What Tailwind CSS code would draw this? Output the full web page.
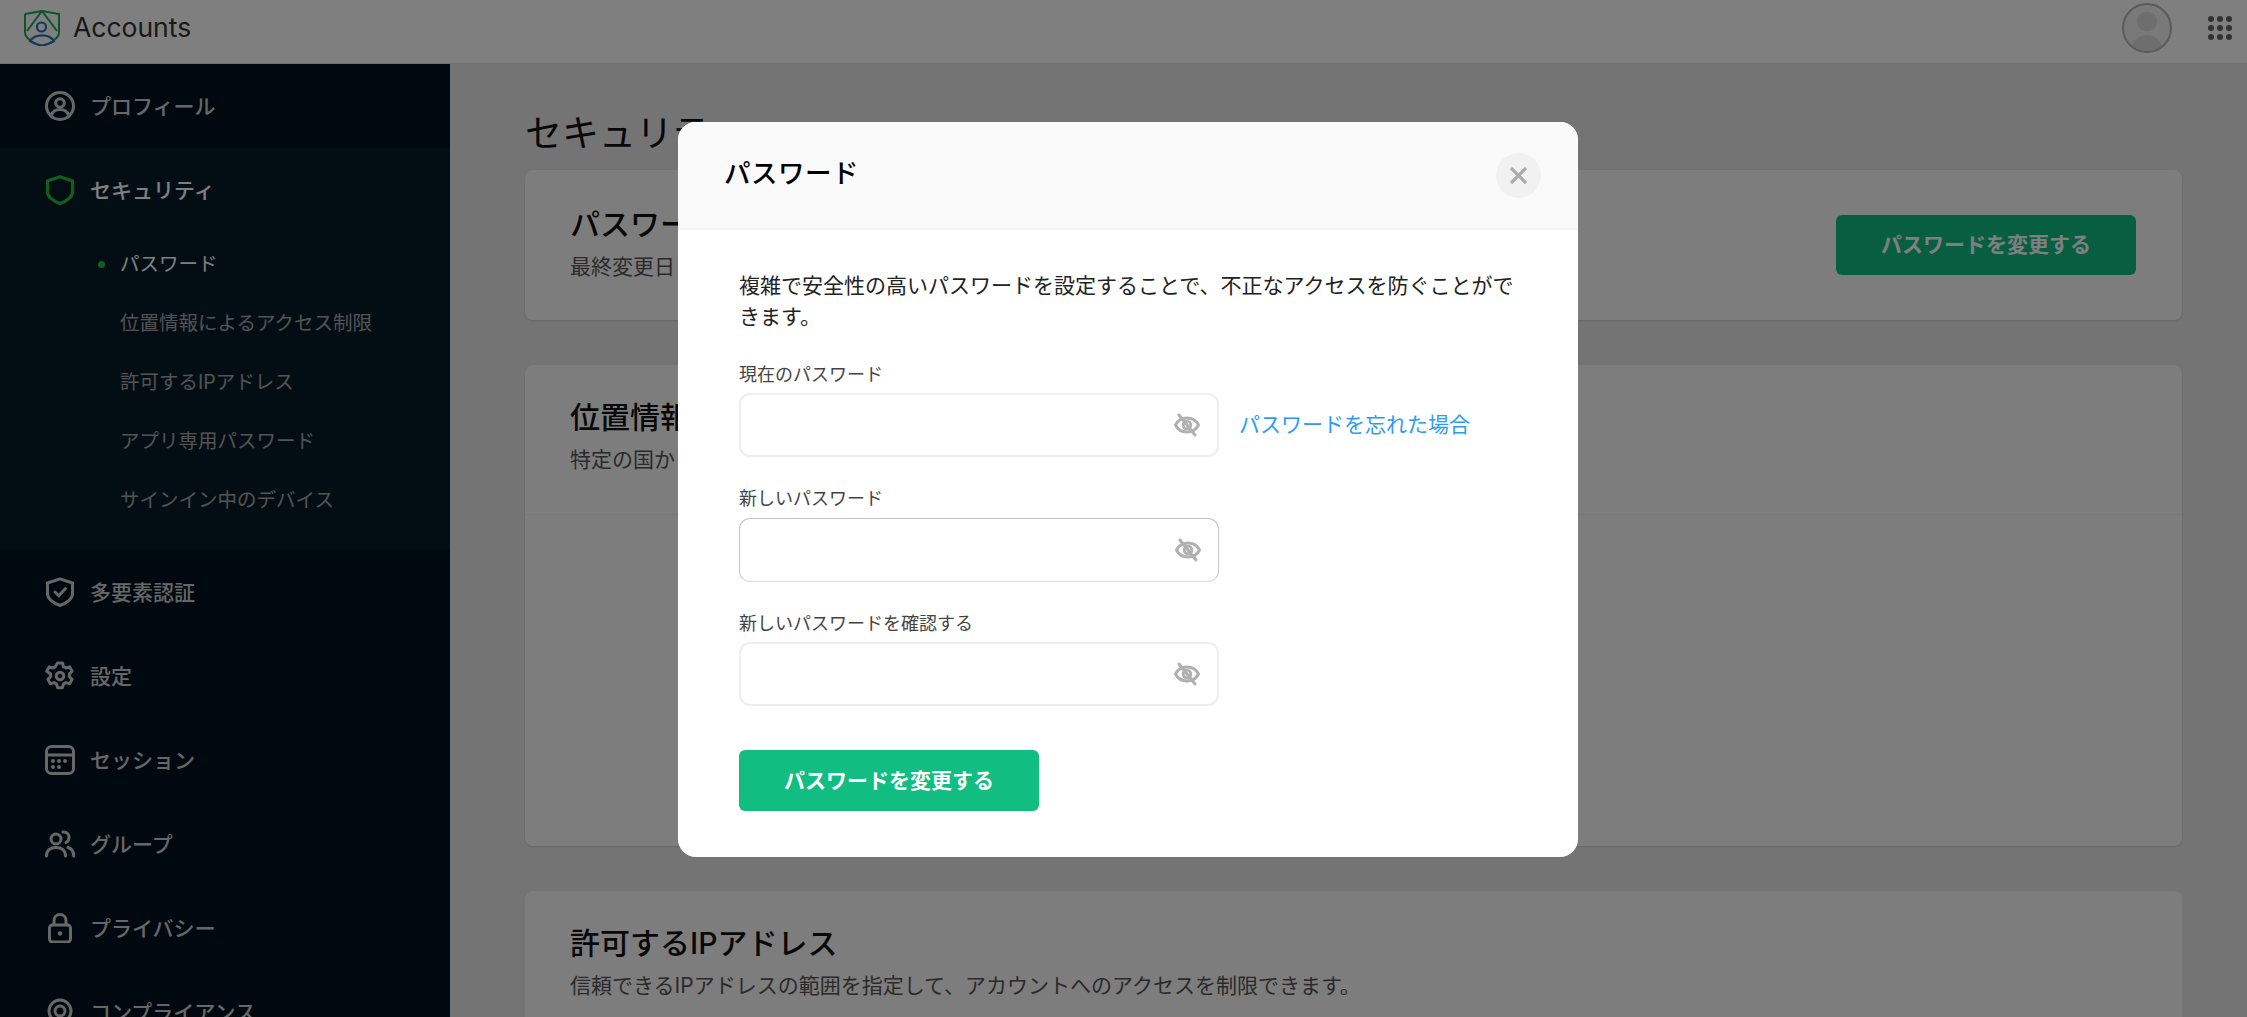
<!DOCTYPE html>
<html lang="ja">
<head>
  <meta charset="UTF-8">
  <title>Accounts - セキュリティ</title>
  <meta name="viewport" content="width=device-width, initial-scale=1.0">
  <script src="https://cdn.jsdelivr.net/npm/@tailwindcss/browser@4"></script>
</head>
<body class="h-[1017px] overflow-hidden bg-[#e8e9eb] text-[#111] font-['Inter','Noto_Sans_CJK_JP',sans-serif]">

  <!-- Top bar -->
  <header class="h-16 flex items-center justify-between bg-white border-b border-[#e2e2e2] pl-6 pr-[15px] pb-2">
    <div class="flex items-center gap-[13px]">
      <svg class="w-9 h-9" viewBox="0 0 36 36" fill="none" stroke-width="2">
        <path d="M1 4 L18 1 L35 4 V22 C35 25 33 28 30 30 M1 4 V22 C1 25 3 28 6 30" stroke="#1da65c"/>
        <path d="M3 21 L18 1 L33 21" stroke="#1da65c"/>
        <circle cx="17.500" cy="17" r="4.500" stroke="#2c6fb8" stroke-width="2.200"/>
        <path d="M6 31 C11 23.500 25 23.500 30 31 C26 33.500 22 35 18 35.500 C14 35 10 33.500 6 31 Z" stroke="#2c6fb8" stroke-width="2.200"/>
      </svg>
      <span class="text-[26.500px] leading-none text-[#333] font-['Inter',sans-serif]">Accounts</span>
    </div>
    <div class="flex items-center gap-[36px]">
      <div class="relative w-[50px] h-[50px] rounded-full border-2 border-[#b5b5b5] bg-[#f2f2f2] overflow-hidden">
        <div class="absolute left-[13px] top-[7px] w-5 h-[19px] rounded-[9px] bg-[#dcdcdc]"></div>
        <div class="absolute left-[7px] top-[30px] w-8 h-6 rounded-t-full bg-[#dcdcdc]"></div>
      </div>
      <div class="grid grid-cols-3 gap-[3px]">
        <span class="w-1.5 h-1.5 rounded-full bg-[#666]"></span>
        <span class="w-1.5 h-1.5 rounded-full bg-[#666]"></span>
        <span class="w-1.5 h-1.5 rounded-full bg-[#666]"></span>
        <span class="w-1.5 h-1.5 rounded-full bg-[#666]"></span>
        <span class="w-1.5 h-1.5 rounded-full bg-[#666]"></span>
        <span class="w-1.5 h-1.5 rounded-full bg-[#666]"></span>
        <span class="w-1.5 h-1.5 rounded-full bg-[#666]"></span>
        <span class="w-1.5 h-1.5 rounded-full bg-[#666]"></span>
        <span class="w-1.5 h-1.5 rounded-full bg-[#666]"></span>
      </div>
    </div>
  </header>

  <div class="flex h-[953px] overflow-hidden">
    <!-- Sidebar -->
    <aside class="w-[450px] shrink-0 bg-[#00121e] text-[#cfcfcf] text-[21px] font-medium leading-none overflow-hidden">
      <a class="h-[84px] flex items-center gap-[15px] pl-[45px]">
        <svg class="w-[30px] h-[30px]" viewBox="0 0 30 30" fill="none" stroke="currentColor" stroke-width="3">
          <circle cx="15" cy="15" r="13.500"/><circle cx="15" cy="12" r="4.300"/>
          <path d="M6.500 24 C8 19.500 11 18.500 15 18.500 C19 18.500 22 19.500 23.500 24"/>
        </svg>
        <span>プロフィール</span>
      </a>

      <div class="h-[402px] bg-[#061d29]">
        <a class="h-[84px] flex items-center gap-[15px] pl-[45px] text-white">
          <svg class="w-[30px] h-[30px]" viewBox="0 0 30 30" fill="none" stroke="#20c03a" stroke-width="3.200">
            <path d="M15 1.800 L27.500 6 V17 C27.500 22 21 26.500 15 28.500 C9 26.500 2.500 22 2.500 17 V6 Z" stroke-linejoin="round"/>
          </svg>
          <span>セキュリティ</span>
        </a>
        <ul class="text-[19.500px] font-normal text-[#a6a6a6] pt-[3px]">
          <li class="h-[59px] flex items-center pl-[98px] text-white">
            <span class="w-[7px] h-[7px] rounded-full bg-[#20c03a] mr-[15px]"></span>パスワード
          </li>
          <li class="h-[59px] flex items-center pl-[120px]">位置情報によるアクセス制限</li>
          <li class="h-[59px] flex items-center pl-[120px]">許可するIPアドレス</li>
          <li class="h-[59px] flex items-center pl-[120px]">アプリ専用パスワード</li>
          <li class="h-[59px] flex items-center pl-[120px]">サインイン中のデバイス</li>
        </ul>
      </div>

      <a class="h-[84px] flex items-center gap-[15px] pl-[45px]">
        <svg class="w-[30px] h-[30px]" viewBox="0 0 30 30" fill="none" stroke="currentColor" stroke-width="3" stroke-linejoin="round" stroke-linecap="round">
          <path d="M15 1.800 L27.500 6 V17 C27.500 22 21 26.500 15 28.500 C9 26.500 2.500 22 2.500 17 V6 Z"/>
          <path d="M10 15 L13.800 18.800 L20.500 11.500"/>
        </svg>
        <span>多要素認証</span>
      </a>
      <a class="h-[84px] flex items-center gap-[15px] pl-[45px]">
        <svg class="w-[30px] h-[30px]" viewBox="0 0 24 24" fill="none" stroke="currentColor" stroke-width="2.400" stroke-linejoin="round">
          <path d="M10 1.500 h4 l.7 3 2 1.100 3-.9 2 3.500-2.200 2.100 v2.300 l2.200 2.100-2 3.500-3-.9-2 1.100-.7 3 h-4 l-.7-3-2-1.100-3 .9-2-3.500 2.200-2.100 v-2.300 L1.300 8.200 l2-3.500 3 .9 2-1.100 Z"/>
          <circle cx="12" cy="12" r="3"/>
        </svg>
        <span>設定</span>
      </a>
      <a class="h-[84px] flex items-center gap-[15px] pl-[45px]">
        <svg class="w-[30px] h-[30px]" viewBox="0 0 30 30" fill="none" stroke="currentColor" stroke-width="3">
          <rect x="1.500" y="1.500" width="27" height="27" rx="5"/>
          <path d="M1.500 10 H28.500"/>
          <g fill="currentColor" stroke="none">
            <circle cx="8" cy="16" r="2"/><circle cx="14" cy="16" r="2"/><circle cx="20" cy="16" r="2"/>
            <circle cx="8" cy="22" r="2"/><circle cx="14" cy="22" r="2"/>
          </g>
        </svg>
        <span>セッション</span>
      </a>
      <a class="h-[84px] flex items-center gap-[15px] pl-[45px]">
        <svg class="w-[30px] h-[30px]" viewBox="0 0 30 30" fill="none" stroke="currentColor" stroke-width="3" stroke-linecap="round">
          <circle cx="11" cy="10" r="5"/>
          <path d="M1.500 27 C1.500 21 6 18.500 11 18.500 C16 18.500 20.500 21 20.500 27"/>
          <path d="M18 3 C21.500 2.500 24 5 24 8.500 C24 11 22.800 12.500 21 13.500"/>
          <path d="M23 18.500 C26.500 19.500 28.700 22.500 28.700 27"/>
        </svg>
        <span>グループ</span>
      </a>
      <a class="h-[84px] flex items-center gap-[15px] pl-[45px]">
        <svg class="w-[30px] h-[30px]" viewBox="0 0 30 30" fill="none" stroke="currentColor" stroke-width="3">
          <rect x="4.500" y="12" width="21" height="17" rx="3"/>
          <path d="M9 12 V8 C9 4 11.500 1.500 15 1.500 C18.500 1.500 21 4 21 8 V12"/>
          <circle cx="15" cy="20.500" r="2.200" fill="currentColor" stroke="none"/>
        </svg>
        <span>プライバシー</span>
      </a>
      <a class="h-[84px] flex items-center gap-[15px] pl-[45px]">
        <svg class="w-[30px] h-[30px]" viewBox="0 0 30 30" fill="none" stroke="currentColor" stroke-width="3">
          <circle cx="15" cy="14" r="11"/><circle cx="15" cy="14" r="5"/>
        </svg>
        <span>コンプライアンス</span>
      </a>
    </aside>

    <!-- Main content behind the modal -->
    <main class="flex-1 pl-[75px] pr-[65px] pt-[46px]">
      <h1 class="text-[37px] leading-[48px] h-[60px] font-normal">セキュリティ</h1>
      <section class="h-[150px] bg-[#fbfbfb] rounded-lg shadow-sm pl-[45px] pr-[46px] flex items-center justify-between">
        <div class="pb-[6px]">
          <h2 class="text-[30px] leading-[44px] mb-[6px] font-medium">パスワード</h2>
          <p class="text-[21px] leading-[30px] text-[#555]">最終変更日：2024年1月15日</p>
        </div>
        <button class="w-[300px] h-[60px] rounded-md bg-[#11bd81] text-white text-[21px] font-bold">パスワードを変更する</button>
      </section>
      <section class="h-[481px] mt-[45px] bg-[#fbfbfb] rounded-lg shadow-sm">
        <div class="h-[150px] pl-[45px] pr-[46px] pt-[30px] border-b border-[#f0f0f0]">
          <h2 class="text-[30px] leading-[44px] mb-[6px] font-medium">位置情報によるアクセス制限</h2>
          <p class="text-[21px] leading-[30px] text-[#555]">特定の国からのアクセスを制限できます。</p>
        </div>
      </section>
      <section class="h-[200px] mt-[45px] bg-[#fbfbfb] rounded-lg pl-[45px] pr-[46px] pt-[30px]">
        <h2 class="text-[30px] leading-[44px] mb-[6px] font-medium">許可するIPアドレス</h2>
        <p class="text-[21px] leading-[30px] text-[#555]">信頼できるIPアドレスの範囲を指定して、アカウントへのアクセスを制限できます。</p>
      </section>
    </main>
  </div>

  <!-- Password modal -->
  <div class="fixed inset-0 bg-black/50">
    <div class="absolute left-[678px] top-[122px] w-[900px] h-[735px] bg-white rounded-[18px] overflow-hidden">
      <div class="h-[108px] bg-[#fafafa] border-b-2 border-[#f5f5f5] flex items-center justify-between pl-[46px] pr-[37px]">
        <h2 class="text-[26.500px] font-medium tracking-[0.5px] text-black -mt-[3px]">パスワード</h2>
        <button class="w-[45px] h-[45px] rounded-full bg-[#f1f1f1] flex items-center justify-center">
          <svg class="w-[17px] h-[17px]" viewBox="0 0 17 17" fill="none" stroke="#ababab" stroke-width="3.200">
            <path d="M1 1 L16 16 M16 1 L1 16"/>
          </svg>
        </button>
      </div>
      <div class="pl-[61px] pr-[60px] pt-[41px]">
        <p class="text-[21px] leading-[30.500px] text-[#222]">複雑で安全性の高いパスワードを設定することで、不正なアクセスを防ぐことができます。</p>

        <label class="block text-[18px] leading-6 text-[#444] mt-[31px] mb-[6px]">現在のパスワード</label>
        <div class="flex items-center gap-[20px]">
          <div class="w-[480px] h-[64px] rounded-[11px] border-2 border-[#eeeeee] flex items-center justify-end pr-[17px]">
            <svg class="w-[26px] h-[24px]" viewBox="0 0 26 24" fill="none" stroke="#b0b0b0" stroke-width="3" stroke-linecap="round">
              <path d="M1.500 12 C4 7 8 5 13 5 C18 5 22 7 24.500 12 C22 17 18 19 13 19 C8 19 4 17 1.500 12 Z"/>
              <circle cx="13" cy="12" r="3.800" stroke-width="2.800"/>
              <path d="M5 2 L21 22"/>
            </svg>
          </div>
          <a class="text-[21px] text-[#2b9cf2]">パスワードを忘れた場合</a>
        </div>

        <label class="block text-[18px] leading-6 text-[#444] mt-[30px] mb-[7px]">新しいパスワード</label>
        <div class="w-[480px] h-[64px] rounded-[11px] border-[1.500px] border-[#c4c4c4] border-b-[#dcdcdc] flex items-center justify-end pr-[17px]">
          <svg class="w-[26px] h-[24px]" viewBox="0 0 26 24" fill="none" stroke="#b0b0b0" stroke-width="3" stroke-linecap="round">
            <path d="M1.500 12 C4 7 8 5 13 5 C18 5 22 7 24.500 12 C22 17 18 19 13 19 C8 19 4 17 1.500 12 Z"/>
            <circle cx="13" cy="12" r="3.800" stroke-width="2.800"/>
            <path d="M5 2 L21 22"/>
          </svg>
        </div>

        <label class="block text-[18px] leading-6 text-[#444] mt-[30px] mb-[6px]">新しいパスワードを確認する</label>
        <div class="w-[480px] h-[64px] rounded-[11px] border-2 border-[#eeeeee] flex items-center justify-end pr-[17px]">
          <svg class="w-[26px] h-[24px]" viewBox="0 0 26 24" fill="none" stroke="#b0b0b0" stroke-width="3" stroke-linecap="round">
            <path d="M1.500 12 C4 7 8 5 13 5 C18 5 22 7 24.500 12 C22 17 18 19 13 19 C8 19 4 17 1.500 12 Z"/>
            <circle cx="13" cy="12" r="3.800" stroke-width="2.800"/>
            <path d="M5 2 L21 22"/>
          </svg>
        </div>

        <button class="block w-[300px] h-[61px] mt-[44px] rounded-md bg-[#11bd81] text-white text-[21px] font-bold">パスワードを変更する</button>
      </div>
    </div>
  </div>

</body>
</html>
